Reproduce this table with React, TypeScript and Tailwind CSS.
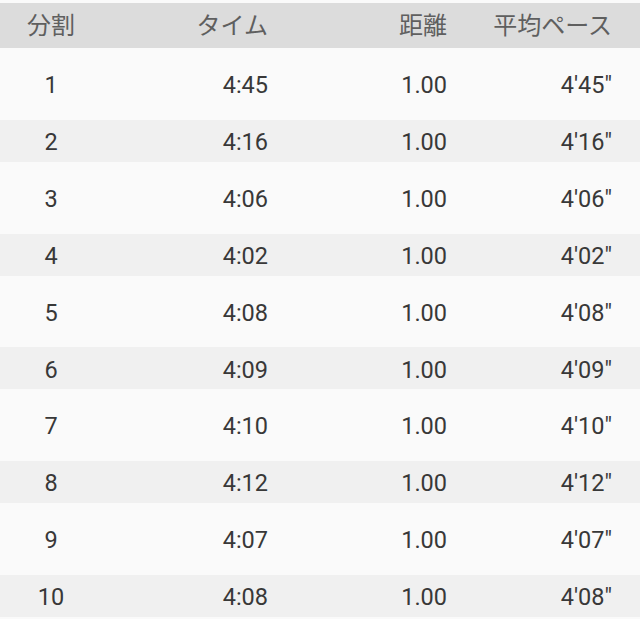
const splits = [
  { n: 1, time: "4:45", dist: "1.00", pace: "4'45\"" },
  { n: 2, time: "4:16", dist: "1.00", pace: "4'16\"" },
  { n: 3, time: "4:06", dist: "1.00", pace: "4'06\"" },
  { n: 4, time: "4:02", dist: "1.00", pace: "4'02\"" },
  { n: 5, time: "4:08", dist: "1.00", pace: "4'08\"" },
  { n: 6, time: "4:09", dist: "1.00", pace: "4'09\"" },
  { n: 7, time: "4:10", dist: "1.00", pace: "4'10\"" },
  { n: 8, time: "4:12", dist: "1.00", pace: "4'12\"" },
  { n: 9, time: "4:07", dist: "1.00", pace: "4'07\"" },
  { n: 10, time: "4:08", dist: "1.00", pace: "4'08\"" },
];

export default function App() {
  return (
    <div
      className="w-[640px] h-[619px] overflow-hidden bg-[#fafafa] pt-[3px]"
      style={{ fontFamily: 'Roboto, "Noto Sans CJK JP", sans-serif' }}
    >
      <div className="grid grid-cols-[102px_166px_179px_165px] pr-[28px] h-[45px] items-center bg-[#dcdcdc] text-[24px] leading-none text-[#5f5f5f]">
        <div className="text-center">分割</div>
        <div className="text-right">タイム</div>
        <div className="text-right">距離</div>
        <div className="text-right">平均ペース</div>
      </div>

      {splits.map((s) => (
        <div
          key={s.n}
          className={
            s.n % 2 === 0
              ? "grid grid-cols-[102px_166px_179px_165px] pr-[28px] h-[42px] items-center bg-[#f0f0f0] text-[23.5px] leading-none text-[#383838] pt-[4px]"
              : "grid grid-cols-[102px_166px_179px_165px] pr-[28px] h-[71.75px] items-center bg-[#fafafa] text-[23.5px] leading-none text-[#383838] pt-[4px]"
          }
        >
          <div className="text-center">{s.n}</div>
          <div className="text-right">{s.time}</div>
          <div className="text-right">{s.dist}</div>
          <div className="text-right">{s.pace}</div>
        </div>
      ))}
    </div>
  );
}
